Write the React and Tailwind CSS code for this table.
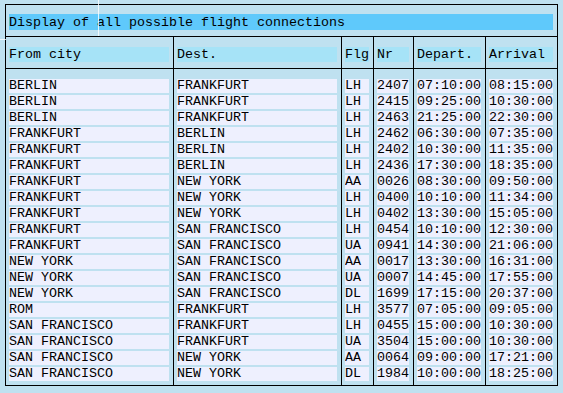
const flights = [
  ["BERLIN", "FRANKFURT", "LH", "2407", "07:10:00", "08:15:00"],
  ["BERLIN", "FRANKFURT", "LH", "2415", "09:25:00", "10:30:00"],
  ["BERLIN", "FRANKFURT", "LH", "2463", "21:25:00", "22:30:00"],
  ["FRANKFURT", "BERLIN", "LH", "2462", "06:30:00", "07:35:00"],
  ["FRANKFURT", "BERLIN", "LH", "2402", "10:30:00", "11:35:00"],
  ["FRANKFURT", "BERLIN", "LH", "2436", "17:30:00", "18:35:00"],
  ["FRANKFURT", "NEW YORK", "AA", "0026", "08:30:00", "09:50:00"],
  ["FRANKFURT", "NEW YORK", "LH", "0400", "10:10:00", "11:34:00"],
  ["FRANKFURT", "NEW YORK", "LH", "0402", "13:30:00", "15:05:00"],
  ["FRANKFURT", "SAN FRANCISCO", "LH", "0454", "10:10:00", "12:30:00"],
  ["FRANKFURT", "SAN FRANCISCO", "UA", "0941", "14:30:00", "21:06:00"],
  ["NEW YORK", "SAN FRANCISCO", "AA", "0017", "13:30:00", "16:31:00"],
  ["NEW YORK", "SAN FRANCISCO", "UA", "0007", "14:45:00", "17:55:00"],
  ["NEW YORK", "SAN FRANCISCO", "DL", "1699", "17:15:00", "20:37:00"],
  ["ROM", "FRANKFURT", "LH", "3577", "07:05:00", "09:05:00"],
  ["SAN FRANCISCO", "FRANKFURT", "LH", "0455", "15:00:00", "10:30:00"],
  ["SAN FRANCISCO", "FRANKFURT", "UA", "3504", "15:00:00", "10:30:00"],
  ["SAN FRANCISCO", "NEW YORK", "AA", "0064", "09:00:00", "17:21:00"],
  ["SAN FRANCISCO", "NEW YORK", "DL", "1984", "10:00:00", "18:25:00"],
];

// column header, cell width, wrapper classes (line on the right except the last one)
const columns = [
  { label: "From city", cell: "w-[160px]", wrap: "border-r border-black" },
  { label: "Dest.", cell: "w-[160px]", wrap: "border-r border-black" },
  { label: "Flg", cell: "w-[24px]", wrap: "border-r border-black" },
  { label: "Nr", cell: "w-[32px]", wrap: "border-r border-black" },
  { label: "Depart.", cell: "w-[64px]", wrap: "border-r border-black" },
  { label: "Arrival", cell: "w-[64px]", wrap: "" },
];

export default function App() {
  return (
    <div
      className="relative w-[563px] h-[393px] bg-[#bfe1f0] text-black text-[13.333px] pt-[4px] pl-[5px] overflow-hidden"
      style={{ fontFamily: '"Liberation Mono", "DejaVu Sans Mono", monospace' }}
    >
      <div className="w-[553px] h-[382px] border border-black flex flex-col">
        {/* title */}
        <div className="h-[32px] border-b border-black pt-[9px] pl-[3px] pr-[4px]">
          <div className="h-[16px] bg-[#5fc9fb] pt-[2px] leading-[14px] whitespace-pre">
            Display of all possible flight connections
          </div>
        </div>

        {/* header + body, one column at a time so the lines run through */}
        <div className="flex flex-1">
          {columns.map((col, ci) => (
            <div key={col.label} className={`flex flex-col pl-[3px] pr-[4px] ${col.wrap}`}>
              <div className="h-[32px] pt-[10px] border-b border-black -ml-[3px] -mr-[4px] pl-[3px] pr-[4px]">
                <div className={`${col.cell} h-[15px] leading-[15px] bg-[#a6e3f7] whitespace-pre`}>
                  {col.label}
                </div>
              </div>
              <div className="flex flex-col gap-[2px] pt-[10px]">
                {flights.map((f, ri) => (
                  <div
                    key={ri}
                    className={`${col.cell} h-[14px] leading-[14px] bg-[#eef0fe] whitespace-pre overflow-hidden`}
                  >
                    {f[ci]}
                  </div>
                ))}
              </div>
            </div>
          ))}
        </div>
      </div>

      {/* screen capture leftovers over the title */}
      <div className="absolute left-[98px] top-0 w-px h-[36px] bg-white/80" />
      <div className="absolute left-0 top-[39px] w-[6px] h-px bg-white/80" />
    </div>
  );
}
